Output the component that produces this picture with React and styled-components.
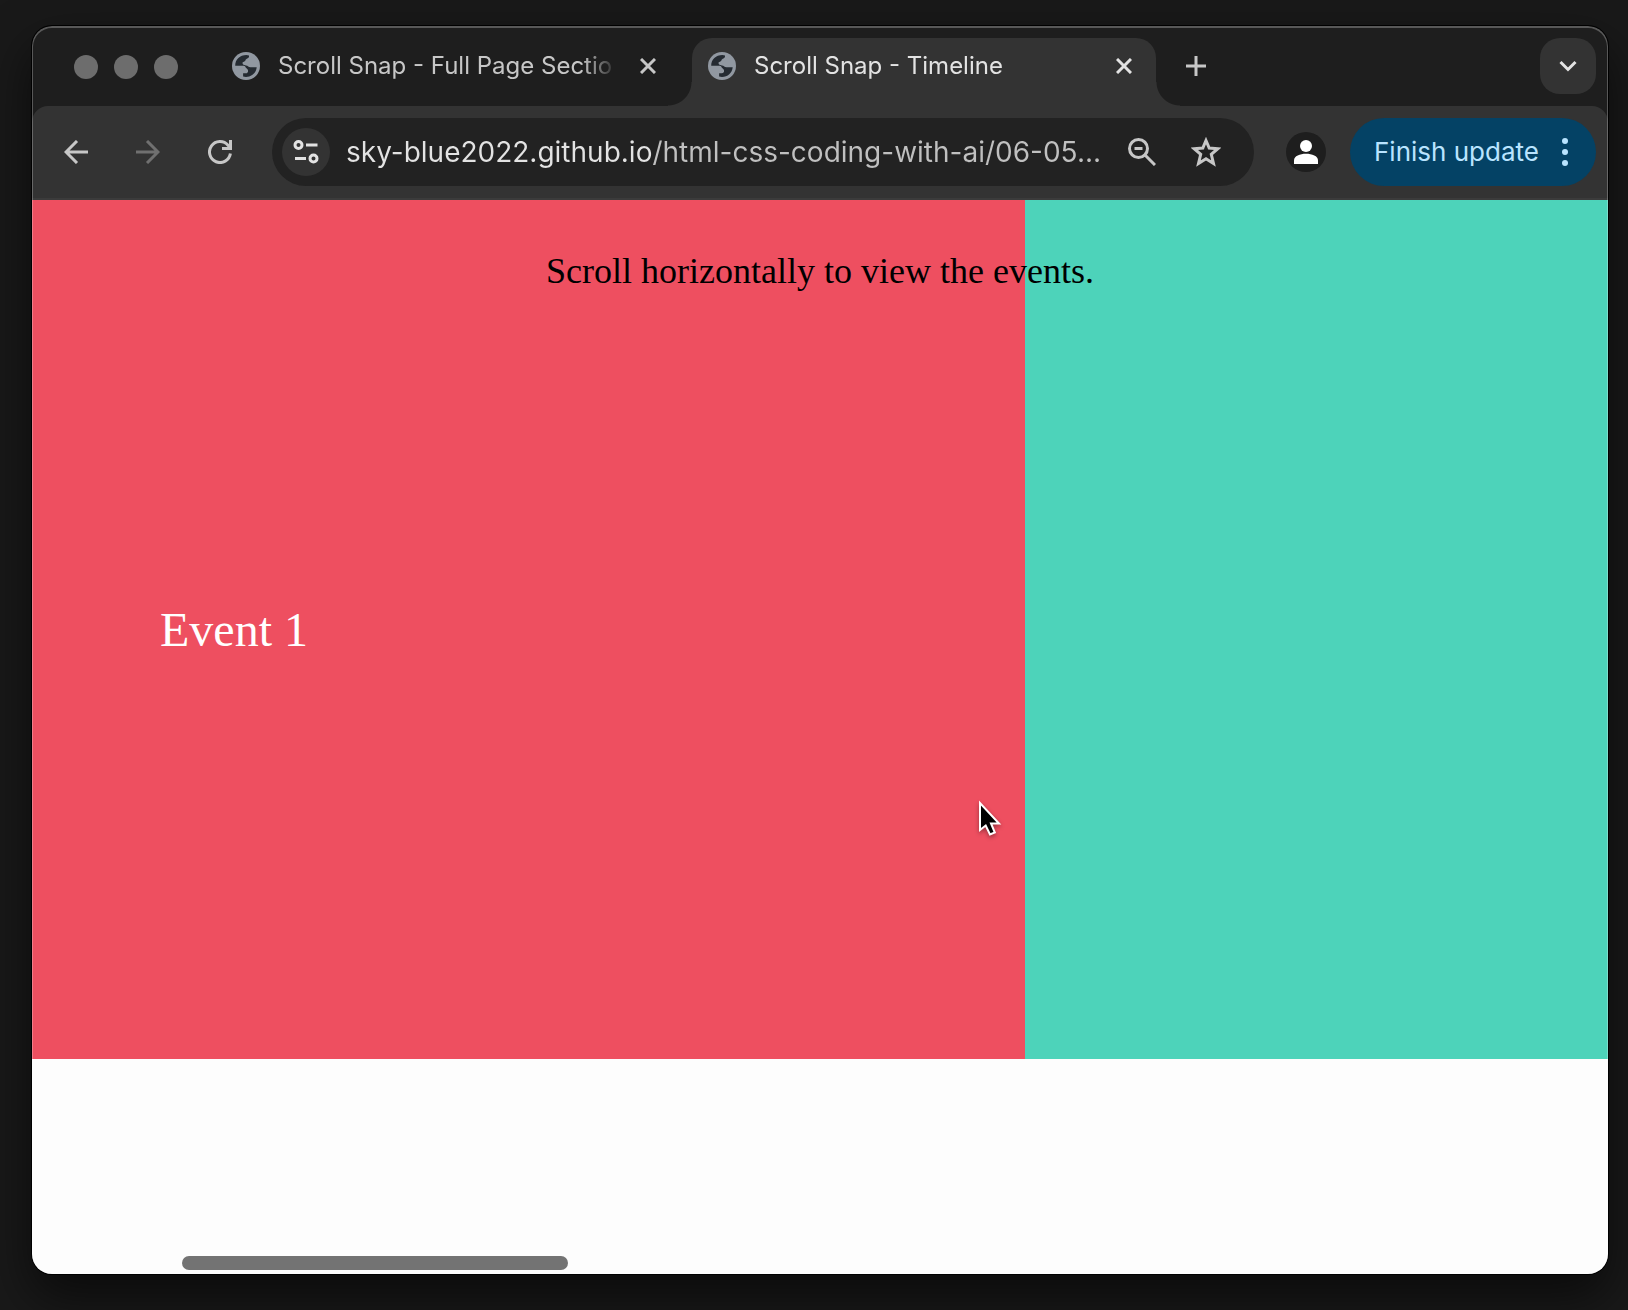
import React, { useState } from "react";
import styled, { createGlobalStyle } from "styled-components";

const GlobalStyle = createGlobalStyle`
  * { box-sizing: border-box; }
  body { margin: 0; background: #191919; }
  button, input { font: inherit; color: inherit; border: 0; margin: 0; padding: 0; background: none; }
  button { cursor: pointer; }
`;

const Desktop = styled.div`
  display: flex;
  min-height: 100vh;
  padding: 26px 20px 36px 32px;
  background: #191919;
  font-family: Inter, "Liberation Sans", sans-serif;
  overflow: hidden;
`;

const BrowserWindow = styled.div`
  position: relative;
  flex: 1;
  min-width: 0;
  display: flex;
  flex-direction: column;
  border-radius: 20px;
  overflow: hidden;
  background: #1e1e1e;
  box-shadow: 0 0 0 1px #000, 0 22px 50px rgba(0, 0, 0, 0.6);

  &::after {
    content: "";
    position: absolute;
    inset: 0;
    border-radius: 20px;
    pointer-events: none;
    box-shadow: inset 0 1px 0 1px rgba(255, 255, 255, 0.26);
  }
`;

const TabStrip = styled.div`
  display: flex;
  height: 80px;
  padding: 12px 12px 0 42px;
`;

const WindowButtons = styled.div`
  display: flex;
  gap: 16px;
  padding-top: 17px;
  margin-right: 40px;
`;

const WindowButton = styled.button`
  width: 24px;
  height: 24px;
  border-radius: 50%;
  background: #6d6d6d;
`;

const Tab = styled.div`
  position: relative;
  display: flex;
  align-items: center;
  width: ${(p) => (p.$active ? 464 : 476)}px;
  height: 68px;
  padding: 0 ${(p) => (p.$active ? 18 : 30)}px 12px 16px;
  border-radius: 20px 20px 0 0;
  color: ${(p) => (p.$active ? "#e3e3e3" : "#c7c7c7")};
  background: ${(p) => (p.$active ? "#333333" : "transparent")};

  &::before,
  &::after {
    content: "";
    display: ${(p) => (p.$active ? "block" : "none")};
    position: absolute;
    bottom: 0;
    width: 24px;
    height: 24px;
  }
  &::before {
    right: 100%;
    background: radial-gradient(circle at 0 0, transparent 23px, #333333 24px);
  }
  &::after {
    left: 100%;
    background: radial-gradient(circle at 100% 0, transparent 23px, #333333 24px);
  }
`;

const TabTitle = styled.span`
  flex: 1;
  min-width: 0;
  margin: 0 12px 0 18px;
  white-space: nowrap;
  font-size: 24px;
  line-height: 32px;
  mask-image: linear-gradient(to right, #000 calc(100% - 40px), transparent calc(100% - 4px));
`;

const Tabs = styled.div`
  display: flex;
  margin-left: -2px;
`;

const IconButton = styled.button`
  display: flex;
  flex: none;
  align-items: center;
  justify-content: center;
  width: ${(p) => p.$size}px;
  height: ${(p) => p.$size}px;
  border-radius: ${(p) => p.$radius || "50%"};
  background: ${(p) => p.$fill || "transparent"};
  color: ${(p) => p.$tone || "#c7c7c7"};
`;

const TabSearch = styled.div`
  margin-left: auto;
`;

const NewTab = styled.div`
  display: flex;
  align-items: center;
  height: 56px;
  margin-left: 20px;
`;

const ToolbarBack = styled.div`
  background: #1e1e1e;
`;

const Toolbar = styled.div`
  display: flex;
  align-items: center;
  height: 94px;
  padding: 0 12px 0 16px;
  border-radius: 16px 16px 0 0;
  border-bottom: 2px solid #3b3b3b;
  background: #333333;
`;

const NavButtons = styled.div`
  display: flex;
  gap: 16px;
  margin-right: 24px;
`;

const AddressBar = styled.div`
  display: flex;
  flex: 1;
  min-width: 0;
  align-items: center;
  height: 68px;
  padding: 0 20px 0 10px;
  border-radius: 34px;
  background: #222222;
`;

const AddressInput = styled.input`
  flex: 1;
  min-width: 0;
  height: 40px;
  margin: 0 12px 0 16px;
  outline: none;
  font-size: 28px;
  line-height: 40px;
  color: #e3e3e3;
  background: linear-gradient(to right, #e3e3e3 308px, #c0c0c0 308px);
  background-clip: text;
  -webkit-text-fill-color: transparent;
`;

const AddressActions = styled.div`
  display: flex;
  gap: 8px;
`;

const Profile = styled.div`
  margin: 0 24px 0 32px;
`;

const UpdateButton = styled.button`
  display: flex;
  flex: none;
  align-items: center;
  justify-content: space-between;
  width: 246px;
  height: 68px;
  padding: 0 28px 0 24px;
  border-radius: 34px;
  background: #044265;
  color: #b9e4ff;
  font-size: 26px;
  line-height: 32px;
  white-space: nowrap;
`;

const Viewport = styled.main`
  position: relative;
  flex: 1;
  display: flex;
  flex-direction: column;
  background: #fdfdfd;
  font-family: "Liberation Serif", serif;
`;

const Hint = styled.p`
  position: absolute;
  top: 50px;
  left: 0;
  right: 0;
  margin: 0;
  text-align: center;
  font-size: 36px;
  line-height: 42px;
  color: #000;
`;

const Timeline = styled.div`
  display: flex;
  flex: 0 0 80%;
`;

const EventPanel = styled.section`
  flex: 0 0 ${(p) => p.$basis}%;
  display: flex;
  align-items: center;
  padding-left: 128px;
  background: ${(p) => p.$fill};
  color: #fff;
  font-size: 48px;
  line-height: 56px;
`;

const ScrollTrack = styled.div`
  margin: auto 0 4px;
  padding-left: 150px;
`;

const ScrollThumb = styled.div`
  width: 386px;
  height: 14px;
  border-radius: 7px;
  background: #737373;
`;

const Pointer = styled.svg`
  position: absolute;
  top: 600px;
  left: 944px;
  filter: drop-shadow(0 2px 2px rgba(0, 0, 0, 0.35));
`;

const Globe = () => (
  <svg width="28" height="28" viewBox="0 0 28 28" fill="none" aria-hidden="true">
    <circle cx="14" cy="14" r="14" fill="#9198a1" />
    <path d="M3.2 13.8C3.2 7.5 8 3.1 14.4 3.1L17 3.5C17.3 5 16.5 6.5 14.8 6.7C13.6 6.9 13.7 8.6 12.7 9.3C11.7 10 10.6 9.8 10.5 11.1C10.5 12.7 12 13.2 13.9 13.4C16 13.6 16.5 15.1 18.5 15.2H24.7C24.2 20.9 19.7 24.9 14 24.9L11.1 24.5V21.3H13.7C15.7 21.2 16.3 19.8 16 18.2C15.7 16.5 13.8 16.4 13.4 15C13 13.6 11.4 13.7 9.9 13.8Z" fill="#252b32" />
  </svg>
);

const Stroke = ({ size = 24, width = 3, d, children }) => (
  <svg width={size} height={size} viewBox={`0 0 ${size} ${size}`} fill="none" stroke="currentColor" strokeWidth={width} aria-hidden="true">
    {d && <path d={d} />}
    {children}
  </svg>
);

const CloseIcon = () => <Stroke size={16} d="M1 1L15 15M15 1L1 15" />;

export default function App() {
  const [address, setAddress] = useState("sky-blue2022.github.io/html-css-coding-with-ai/06-05...");
  return (
    <>
      <GlobalStyle />
      <Desktop>
        <BrowserWindow>
          <TabStrip>
            <WindowButtons>
              <WindowButton aria-label="Close window" />
              <WindowButton aria-label="Minimize window" />
              <WindowButton aria-label="Zoom window" />
            </WindowButtons>
            <Tabs>
              <Tab>
                <Globe />
                <TabTitle>Scroll Snap - Full Page Sectio</TabTitle>
                <IconButton $size={28} aria-label="Close Full Page Sections tab"><CloseIcon /></IconButton>
              </Tab>
              <Tab $active>
                <Globe />
                <TabTitle>Scroll Snap - Timeline</TabTitle>
                <IconButton $size={28} $tone="#e3e3e3" aria-label="Close Timeline tab"><CloseIcon /></IconButton>
              </Tab>
            </Tabs>
            <NewTab>
              <IconButton $size={40} aria-label="New tab"><Stroke size={20} d="M10 0V20M0 10H20" /></IconButton>
            </NewTab>
            <TabSearch>
              <IconButton $size={56} $radius="20px" $fill="#333333" $tone="#e3e3e3" aria-label="Search tabs">
                <Stroke size={18} d="M1.5 5L9 12.5L16.5 5" />
              </IconButton>
            </TabSearch>
          </TabStrip>
          <ToolbarBack>
            <Toolbar>
              <NavButtons>
                <IconButton $size={56} aria-label="Back"><Stroke d="M24 12H2M13 1L2 12L13 23" /></IconButton>
                <IconButton $size={56} $tone="#707070" aria-label="Forward"><Stroke d="M0 12H22M11 1L22 12L11 23" /></IconButton>
                <IconButton $size={56} aria-label="Reload">
                  <Stroke d="M22.4 13.5A10.5 10.5 0 1 1 20 5.2L22.5 8M22.5 0V8.5H14" />
                </IconButton>
              </NavButtons>
              <AddressBar>
                <IconButton $size={48} $fill="#333333" $tone="#e3e3e3" aria-label="View site information">
                  <Stroke size={26}>
                    <circle cx="5.5" cy="6" r="3.5" />
                    <circle cx="20.5" cy="19.5" r="3.5" />
                    <path d="M13 6H24.5M2 19.5H13" />
                  </Stroke>
                </IconButton>
                <AddressInput aria-label="Address" value={address} onChange={(e) => setAddress(e.target.value)} />
                <AddressActions>
                  <IconButton $size={56} aria-label="Zoom">
                    <Stroke size={28}>
                      <circle cx="10.5" cy="10.5" r="9" />
                      <path d="M17 17L27 27M6.5 10.5H14.5" />
                    </Stroke>
                  </IconButton>
                  <IconButton $size={56} aria-label="Bookmark this tab">
                    <Stroke size={30} d="M15 3.5L18.2 11L26.8 11.7L20.3 17.3L22.5 26.5L15 21.8L7.5 26.5L9.7 17.3L3.2 11.7L11.8 11Z" />
                  </IconButton>
                </AddressActions>
              </AddressBar>
              <Profile>
                <IconButton $size={40} $fill="#1e1e1e" $tone="#ffffff" aria-label="Profile">
                  <svg width="24" height="24" viewBox="0 0 24 24" fill="currentColor" aria-hidden="true">
                    <circle cx="12" cy="6" r="6" />
                    <path d="M0 24V20.5C0 16 6 13.8 12 13.8S24 16 24 20.5V24Z" />
                  </svg>
                </IconButton>
              </Profile>
              <UpdateButton>
                Finish update
                <svg width="6" height="28" viewBox="0 0 6 28" fill="currentColor" aria-hidden="true">
                  <circle cx="3" cy="3" r="3" />
                  <circle cx="3" cy="14" r="3" />
                  <circle cx="3" cy="25" r="3" />
                </svg>
              </UpdateButton>
            </Toolbar>
          </ToolbarBack>
          <Viewport>
            <Timeline>
              <EventPanel $basis={63} $fill="#ee4f60">Event 1</EventPanel>
              <EventPanel $basis={37} $fill="#4dd3ba" />
            </Timeline>
            <Hint>Scroll horizontally to view the events.</Hint>
            <ScrollTrack><ScrollThumb /></ScrollTrack>
            <Pointer width="32" height="44" viewBox="0 0 32 44" aria-hidden="true">
              <path d="M4 3V30L9.7 25.5L14 34.5L18.8 32.5L15 23.5H23Z" fill="#000" stroke="#fff" strokeWidth="2" />
            </Pointer>
          </Viewport>
        </BrowserWindow>
      </Desktop>
    </>
  );
}
